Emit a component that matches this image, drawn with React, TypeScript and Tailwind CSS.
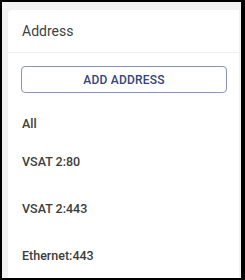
import React from "react";

export default function App() {
  const items = ["VSAT 2:80", "VSAT 2:443", "Ethernet:443"];
  return (
    <div
      className="w-[245px] h-[280px] box-border border-black border-l-2 border-t-2 border-r-4 border-b-2 bg-[#f2f2f2] pl-[6px] pt-[8px] pr-[2px] overflow-hidden"
      style={{ fontFamily: "Roboto, 'Liberation Sans', sans-serif" }}
    >
      <div className="h-[268px] bg-white rounded-tl-[4px] overflow-hidden flex flex-col">
        <div className="h-[43px] shrink-0 border-b border-[#efefef] flex items-center pl-[14px]">
          <span className="text-[14px] text-[#3f3f3f] leading-none">Address</span>
        </div>
        <div className="pt-[13px] pl-[13px] pr-[12px] shrink-0">
          <button className="w-full h-[27px] border border-[#8696c0] rounded-[4px] flex items-center justify-center text-[12px] font-medium text-[#33457a] tracking-[0.2px] leading-none">
            ADD ADDRESS
          </button>
        </div>
        <div className="mt-[17px] h-[29px] shrink-0 flex items-center pl-[14px] text-[12.5px] font-medium text-[#3d3d3d] leading-none">
          All
        </div>
        {items.map((t) => (
          <div
            key={t}
            className="h-[47px] shrink-0 flex items-center pl-[14px] text-[12.5px] font-medium text-[#3d3d3d] leading-none"
          >
            {t}
          </div>
        ))}
      </div>
    </div>
  );
}
